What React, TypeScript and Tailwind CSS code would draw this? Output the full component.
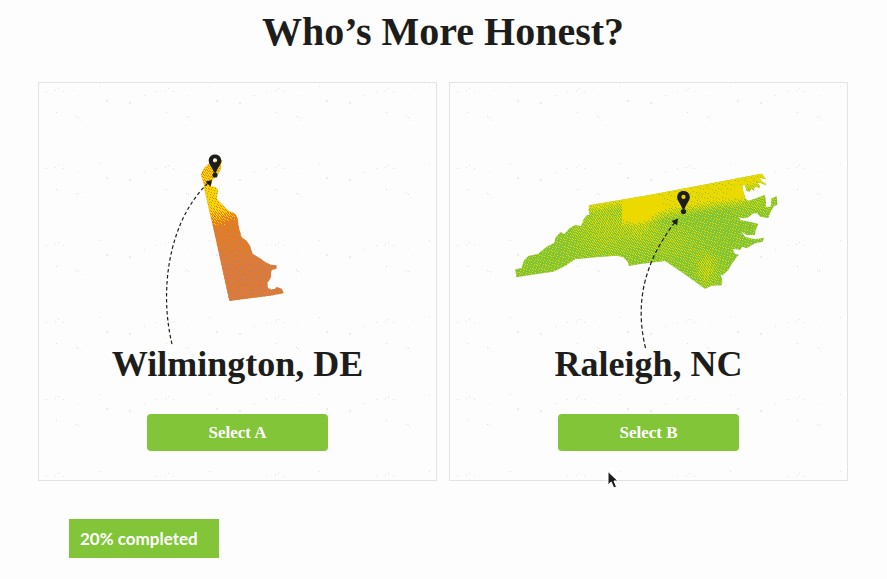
import { useId } from "react";
import type { ReactNode } from "react";

const INK = "#1d1d1b";

const DELAWARE_OUTLINE =
  "M190 66 L217 60 L213 72 L212 88 L205 102 L196 110 L186 122 L182 140 L196 141 L204 150 L201 168 L201 178 L215 192 L236 214 L248 217 L258 224 L264 240 L265 255 L270 275 L275 292 L290 302 L300 318 L308 342 L330 355 L345 366 L362 374 L380 376 L379 386 L364 391 L362 415 L352 428 L353 443 L364 449 L375 446 L380 441 L395 446 L401 460 L360 467 L300 475 L238 483 L200 310 L164 150 L160 125 L153 105 L160 88 L175 72 Z";

const NORTH_CAROLINA_OUTLINE =
  "M252 136 L434 105 L770 41 L783 58 L776 56 L764 53 L768 62 L783 71 L781 76 L766 68 L757 69 L766 79 L764 84 L752 80 L748 84 L747 92 L739 87 L733 95 L724 92 L720 76 L712 76 L715 95 L722 117 L730 122 L750 116 L780 105 L783 128 L782 140 L797 140 L799 115 L809 112 L815 108 L817 135 L807 138 L797 155 L790 174 L765 170 L757 160 L745 160 L730 172 L715 175 L702 172 L707 180 L740 187 L760 192 L752 210 L750 225 L725 225 L708 214 L720 230 L750 238 L777 233 L773 245 L750 250 L725 265 L712 260 L705 270 L695 268 L683 268 L690 282 L701 284 L695 292 L680 312 L670 330 L653 346 L646 342 L652 360 L650 376 L620 377 L600 386 L535 340 L480 303 L405 312 L372 318 L368 305 L355 292 L335 287 L270 292 L210 298 L180 318 L145 335 L90 343 L34 352 L31 328 L50 324 L56 303 L70 288 L100 281 L125 260 L148 248 L152 232 L168 216 L178 222 L192 206 L210 195 L228 198 L236 178 L245 166 L254 164 L251 150 Z";

const SPECKS: [number, number, number, string][] = [
  [7, 8, 1, "#e2e2e4"],
  [16, 7, 1, "#e2e2e4"],
  [19, 5, 1, "#e2e2e4"],
  [24, 8, 1, "#e2e2e4"],
  [39, 12, 1, "#eeeeee"],
  [60, 3, 1, "#e2e2e4"],
  [67, 17, 2, "#ebebed"],
  [90, 19, 2, "#ebebed"],
  [17, 29, 1, "#dedee0"],
  [37, 33, 1, "#dedee0"],
  [39, 34, 1, "#e2e2e4"],
  [41, 37, 1, "#eeeeee"],
  [105, 12, 1, "#e2e2e4"],
];

type Box = { x: number; y: number; width: number; height: number };
type Field = (x: number, y: number) => number;

const fract = (v: number) => v - Math.floor(v);

/** Interleaved gradient noise: an even 0..1 threshold for each pixel. */
const threshold = (x: number, y: number) => fract(52.9829189 * fract(0.06711056 * x + 0.00583715 * y));

/** Halftone of a 0..1 density field, as one path of horizontal runs. */
function dither(box: Box, density: Field, shift = 0): string {
  let d = "";
  for (let y = box.y; y < box.y + box.height; y++) {
    let start = -1;
    for (let x = box.x; x <= box.x + box.width; x++) {
      const lit = x < box.x + box.width && density(x, y) > fract(threshold(x, y) + shift);
      if (lit && start < 0) start = x;
      if (!lit && start >= 0) {
        d += `M${start} ${y}h${x - start}v1h${start - x}z`;
        start = -1;
      }
    }
  }
  return d;
}

const clamp = (v: number) => Math.max(0, Math.min(1, v));
const blob = (x: number, y: number, cx: number, cy: number, rx: number, ry: number) =>
  Math.exp(-(((x - cx) / rx) ** 2) - ((y - cy) / ry) ** 2);

const DE_BOX: Box = { x: 198, y: 152, width: 90, height: 152 };
const DE_YELLOW = dither(DE_BOX, (x, y) => {
  if (y < 186) return 0.68;
  if (y < 208) return 0.85 - clamp((x - 214) / 30) * 0.5;
  return clamp(0.8 - (y - 208) / 24 - clamp((x - 220) / 20) * 0.4);
});
const DE_PINK = dither(DE_BOX, (_x, y) => clamp((y - 225) / 40) * 0.27, 0.3);
const DE_GREY = dither(DE_BOX, (x, y) => clamp((y - 212) / 14 + (x - 226) / 50) * 0.24, 0.6);

const NC_BOX: Box = { x: 513, y: 170, width: 268, height: 122 };
const NC_YELLOW = dither(NC_BOX, (x, y) => {
  const depth = y - (205 - (x - 589) * 0.179);
  const band = x < 622 ? -4 : x < 745 ? 15 : 4;
  const strip = clamp(1.1 - (depth - band) / 12);
  const pocket = blob(x, y, 640, 212, 14, 20);
  const west = blob(x, y, 606, 226, 32, 28) * 0.28;
  const centre = blob(x, y, 672, 242, 26, 16) * 0.18;
  const south = blob(x, y, 706, 268, 10, 14) * 0.4;
  const coast = blob(x, y, 750, 200, 24, 12) * 0.2;
  return 0.16 + strip * 0.76 + pocket * 0.6 + west + centre + south + coast;
});

function Pin({ x, y }: { x: number; y: number }) {
  return (
    <g fill={INK} transform={`translate(${x} ${y})`}>
      <path
        fillRule="evenodd"
        d="M0 0 C-3.8 0 -6.3 2.7 -6.3 6.2 C-6.3 9.6 -2.4 13.6 -1 18 L1 18 C2.4 13.6 6.3 9.6 6.3 6.2 C6.3 2.7 3.8 0 0 0 Z M0 3.8 A2.1 2.1 0 1 1 0 8 A2.1 2.1 0 1 1 0 3.8 Z"
      />
      <circle cx="0" cy="20.5" r="2.6" />
    </g>
  );
}

function DelawareMap() {
  return (
    <svg viewBox="39 150 397 200" className="block h-[200px] w-full" role="img" aria-label="Map of Delaware">
      <defs>
        <clipPath id="de-shape">
          <path transform="translate(150 140) scale(.33333)" d={DELAWARE_OUTLINE} />
        </clipPath>
      </defs>
      <g clipPath="url(#de-shape)">
        <rect {...DE_BOX} fill="#f07a18" />
        <path d={DE_PINK} fill="#d96e6a" />
        <path d={DE_GREY} fill="#a98c5c" />
        <path d={DE_YELLOW} fill="#f0d800" />
      </g>
      <path d="M172 344 C160 295 166 224 208 183" fill="none" stroke={INK} strokeWidth="1.2" strokeDasharray="3.5 2.5" />
      <path d="M212 180 L210.5 186.5 L205.5 181.5 Z" fill={INK} />
      <Pin x={215} y={154.5} />
    </svg>
  );
}

function NorthCarolinaMap() {
  return (
    <svg viewBox="450 150 397 200" className="block h-[200px] w-full" role="img" aria-label="Map of North Carolina">
      <defs>
        <clipPath id="nc-shape">
          <path transform="translate(505 160) scale(.33333)" d={NORTH_CAROLINA_OUTLINE} />
        </clipPath>
      </defs>
      <g clipPath="url(#nc-shape)">
        <rect {...NC_BOX} fill="#80c538" />
        <path d={NC_YELLOW} fill="#ecd900" />
      </g>
      <path d="M645.5 348 C634 300 646 260 675 222" fill="none" stroke={INK} strokeWidth="1.2" strokeDasharray="4 2.5" />
      <path d="M678 218.5 L677 225.5 L671.5 221 Z" fill={INK} />
      <Pin x={683.5} y={191} />
    </svg>
  );
}

function Texture() {
  const id = useId();
  return (
    <svg className="pointer-events-none absolute inset-0 h-full w-full" aria-hidden="true">
      <defs>
        <pattern id={id} width="110" height="77" patternUnits="userSpaceOnUse">
          {SPECKS.map(([x, y, size, fill]) => (
            <rect key={`${x}-${y}`} x={x} y={y} width={size} height={size} fill={fill} />
          ))}
        </pattern>
      </defs>
      <rect width="100%" height="100%" fill={`url(#${id})`} />
    </svg>
  );
}

function CityCard({ city, action, children }: { city: string; action: string; children: ReactNode }) {
  return (
    <section className="relative min-w-0 flex-1 border border-[#e3e3e5] pt-[67px] pb-[29px]">
      <Texture />
      <div className="relative flex flex-col items-center">
        {children}
        <h2 className="-mt-2 text-4xl leading-[44px] font-bold">{city}</h2>
        <button type="button" className="mt-[28px] h-[37px] rounded bg-[#82c539] px-[61px] text-[17px] font-bold text-white">
          {action}
        </button>
      </div>
    </section>
  );
}

export default function App() {
  return (
    <main className="relative min-h-screen bg-[#fdfdfd] pt-2 pr-[39px] pb-[21px] pl-[38px] font-['Liberation_Serif',serif] text-[#1d1d1b]">
      <h1 className="text-center text-[40px] leading-[48px] font-bold">Who’s More Honest?</h1>
      <div className="mt-[26px] flex gap-3">
        <CityCard city="Wilmington, DE" action="Select A">
          <DelawareMap />
        </CityCard>
        <CityCard city="Raleigh, NC" action="Select B">
          <NorthCarolinaMap />
        </CityCard>
      </div>
      <div className="mt-[38px] ml-[31px] flex h-[39px] w-[150px] items-center bg-[#82c539] pl-[11px] font-[Lato,sans-serif] text-[17px] font-bold text-white">
        20% completed
      </div>
      <svg className="absolute top-[470px] left-[606px] h-[20px] w-[14px]" viewBox="0 0 14 20" aria-hidden="true">
        <path d="M2 1.5 V15 L5.2 12 L7.8 18 L10.5 16.8 L8 11 H12 Z" fill={INK} stroke="#fff" strokeWidth="1" />
      </svg>
    </main>
  );
}
